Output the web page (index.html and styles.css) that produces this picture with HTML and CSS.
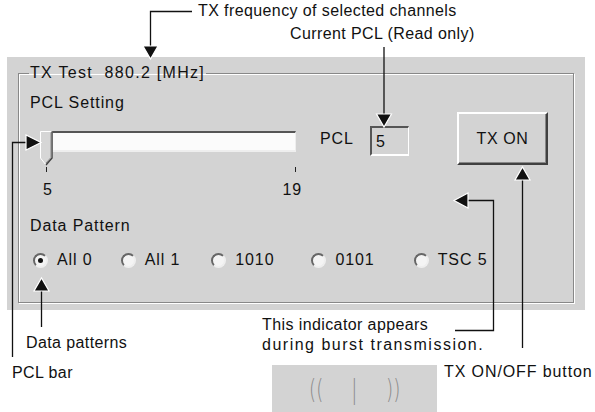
FILE: index.html
```html
<!DOCTYPE html>
<html>
<head>
    <meta charset="utf-8" />
    <title>TX Test</title>
    <link rel="stylesheet" href="styles.css">
</head>
<body>
<div class="page">
    <div class="top">
        <p class="note note-freq">TX frequency of selected channels</p>
        <p class="note note-pcl">Current PCL (Read only)</p>
    </div>

    <div class="panel">
        <fieldset class="group">
            <legend>TX Test&nbsp;&nbsp;880.2 [MHz]</legend>
            <div class="caption">PCL Setting</div>
            <div class="pcl-row">
                <div class="slider">
                    <div class="track">
                        <div class="track-in"></div>
                        <svg class="thumb" width="13" height="36" viewBox="0 0 13 36">
                            <path d="M0.5 0.5 H12 V27 L6 34 L0.5 27 Z" fill="#d6d6d6" stroke="#fff" />
                            <path d="M12 0.5 V27 L6 34" fill="none" stroke="#404040" stroke-width="1.5" />
                            <path d="M11 1.5 V26.5 L6 32" fill="none" stroke="#888" />
                        </svg>
                    </div>
                    <div class="ticks">
                        <span class="tick"></span>
                        <span class="tick"></span>
                    </div>
                    <div class="tick-labels">
                        <span>5</span>
                        <span>19</span>
                    </div>
                </div>
                <div class="pcl-label">PCL</div>
                <div class="pcl-box">5</div>
                <button class="tx-btn">TX ON</button>
            </div>
            <div class="caption caption-data">Data Pattern</div>
            <div class="radios">
                <label class="radio on"><span class="dot"></span>All 0</label>
                <label class="radio r-all1"><span class="dot"></span>All 1</label>
                <label class="radio r-1010"><span class="dot"></span>1010</label>
                <label class="radio r-0101"><span class="dot"></span>0101</label>
                <label class="radio r-tsc"><span class="dot"></span>TSC 5</label>
            </div>
        </fieldset>
    </div>

    <div class="bottom">
        <div class="col-left">
            <p class="note note-data">Data patterns</p>
            <p class="note note-bar">PCL bar</p>
        </div>
        <div class="col-mid">
            <p class="note">This indicator appears<br /><span class="wide">during burst transmission.</span></p>
            <div class="indicator"><span>((</span><span class="bar">|</span><span>))</span></div>
        </div>
        <div class="col-right">
            <p class="note note-btn">TX ON/OFF button</p>
        </div>
    </div>

    <svg class="arrows" width="595" height="412" viewBox="0 0 595 412">
        <g fill="none" stroke="#111" stroke-width="1.3">
            <path d="M192 11.5 H150.5 V48" />
            <path d="M384 47 V116" />
            <path d="M12.5 357 V142.5 H28" />
            <path d="M41.5 327 V289" />
            <path d="M455 330.5 H493.5 V200.5 H467" />
            <path d="M522.5 348 V178" />
        </g>
        <g fill="#111" stroke="#fff" stroke-width="1.2">
            <path d="M143 46 H158 L150.5 59 Z" />
            <path d="M376.5 114 H391.5 L384 127 Z" />
            <path d="M26 135 V150 L41 142.5 Z" />
            <path d="M34 291 H49 L41.5 278 Z" />
            <path d="M468 193 V208 L454 200.5 Z" />
            <path d="M515 180 H530 L522.5 167 Z" />
        </g>
    </svg>
</div>
</body>
</html>
```

FILE: styles.css
```css
* { padding: 0; margin: 0; box-sizing: border-box; }

body { background: #fff; font-family: "Liberation Sans", Arial, sans-serif; }

.page { width: 595px; height: 412px; position: relative; overflow: hidden; }

.note { font-size: 16px; line-height: 20px; letter-spacing: 0.4px; color: #111; white-space: nowrap; }

/* top notes */
.top { height: 57px; }
.note-freq { padding: 1px 0 0 198px; }
.note-pcl { padding: 3px 0 0 290px; }

/* grey dialog */
.panel { margin-left: 7px; width: 578px; height: 253px; background: #d3d3d3; padding: 7px 11px 0 11px; }

.group { height: 239px; width: 556px; border: 1px solid #888; box-shadow: 1px 1px 0 #fff, inset 1px 1px 0 #fff; padding: 0 0 0 11px; font-size: 16px; letter-spacing: 0.9px; color: #111; }
.group legend { margin-left: -1px; padding: 0 1px; line-height: 18px; font-size: 16px; letter-spacing: 1.3px; }

.caption { margin-top: 12px; line-height: 18px; height: 18px; }
.caption-data { margin-top: 23px; }

.pcl-row { display: flex; align-items: flex-start; height: 82px; }

.slider { width: 262px; margin: 13px 0 0 10px; }
.track { position: relative; height: 34px; }
.track-in { margin: 6px 0 0 8px; height: 21px; width: 248px; background: #fbfbfb; border-top: 2px solid #555; border-left: 1px solid #777; border-bottom: 2px solid #eee; border-right: 1px solid #eee; }
.thumb { position: absolute; left: 0; top: 0; }
.ticks { display: flex; justify-content: space-between; padding: 2px 6px 0 6px; height: 6px; }
.tick { width: 1px; height: 5px; background: #222; }
.tick-labels { display: flex; justify-content: space-between; padding: 10px 0 0 3px; line-height: 18px; }

.pcl-label { margin: 18px 0 0 18px; width: 50px; line-height: 18px; }
.pcl-box { margin: 14px 0 0 0; width: 39px; height: 30px; padding: 5px 0 0 4px; line-height: 18px; background: #d3d3d3; border-top: 2px solid #555; border-left: 2px solid #555; border-right: 1px solid #fff; border-bottom: 2px solid #fff; }
.tx-btn { margin: 0 0 0 48px; width: 91px; height: 53px; background: #d3d3d3; font-family: "Liberation Sans", Arial, sans-serif; font-size: 16px; letter-spacing: 0.6px; color: #111; border-top: 2px solid #fff; border-left: 2px solid #fff; border-right: 2px solid #404040; border-bottom: 2px solid #404040; box-shadow: inset -1px -1px 0 #888; }

.radios { display: flex; align-items: center; margin-top: 16px; height: 18px; }
.radio { display: flex; align-items: center; line-height: 18px; }
.dot { display: block; width: 15px; height: 15px; margin: 0 9px 0 3px; border-radius: 50%; background: #f4f4f4; border: 2px solid; border-color: #666 #eee #eee #666; position: relative; }
.radio.on .dot::after { content: ""; position: absolute; left: 3px; top: 3px; width: 5px; height: 5px; border-radius: 50%; background: #111; }
.r-all1 { margin-left: 25px; }
.r-1010 { margin-left: 28px; }
.r-0101 { margin-left: 34px; }
.r-tsc { margin-left: 36px; }

/* bottom notes */
.bottom { display: flex; height: 102px; }
.col-left { width: 262px; }
.note-data { padding: 23px 0 0 26px; }
.note-bar { padding: 10px 0 0 12px; }
.col-mid { width: 182px; }
.col-mid .note { padding-top: 5px; }
.wide { letter-spacing: 1.5px; }
.indicator { margin: 10px 0 0 10px; width: 165px; height: 48px; background: #d3d3d3; display: flex; align-items: center; justify-content: center; gap: 24px; font-size: 26px; line-height: 30px; color: #888; font-family: "DejaVu Sans", sans-serif; font-weight: 200; }
.indicator span { display: block; transform: scaleX(0.7); }
.col-right .note-btn { padding-top: 52px; letter-spacing: 0.9px; }

.arrows { position: absolute; left: 0; top: 0; pointer-events: none; }
```
